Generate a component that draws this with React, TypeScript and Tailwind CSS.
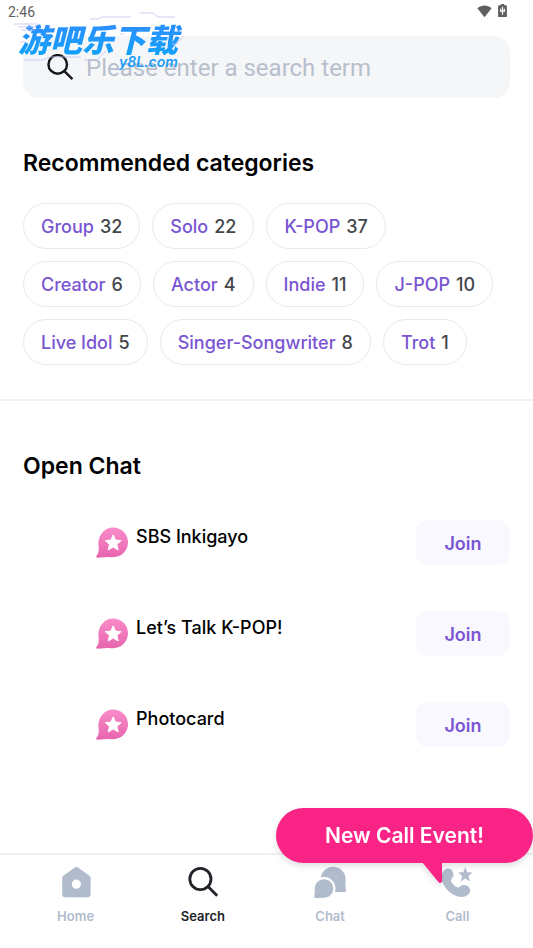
import { useState } from "react"
import clsx from "clsx"

const categories = [
  { name: "Group", count: 32 },
  { name: "Solo", count: 22 },
  { name: "K-POP", count: 37 },
  { name: "Creator", count: 6 },
  { name: "Actor", count: 4 },
  { name: "Indie", count: 11 },
  { name: "J-POP", count: 10 },
  { name: "Live Idol", count: 5 },
  { name: "Singer-Songwriter", count: 8 },
  { name: "Trot", count: 1 },
]

const rooms = ["SBS Inkigayo", "Let’s Talk K-POP!", "Photocard"]

const tabs = [
  { name: "Home", icon: HomeIcon },
  { name: "Search", icon: SearchIcon },
  { name: "Chat", icon: ChatIcon },
  { name: "Call", icon: CallIcon },
]

export default function App() {
  return (
    <div className="relative flex min-h-screen flex-col bg-white font-['Inter',sans-serif] text-black">
      <StatusBar />
      <Watermark />
      <main className="flex-1">
        <SearchBox />
        <Categories />
        <OpenChat />
      </main>
      <TabBar />
    </div>
  )
}

function StatusBar() {
  return (
    <header className="flex h-9 items-start justify-between pt-1 pr-[26px] pl-2 text-[#5f5f5f]">
      <span className="font-['Roboto',sans-serif] text-sm leading-4">2:46</span>
      <div className="flex items-start gap-[6px]">
        <svg className="h-[14px] w-[15px]" viewBox="0 0 15 14" fill="currentColor" aria-hidden="true">
          <path d="M7.5 13.2.4 4.2C4.6.5 10.4.5 14.6 4.2z" />
        </svg>
        <svg className="h-[14px] w-[9px]" viewBox="0 0 9 14" aria-hidden="true">
          <path d="M2.8 0h3.4v1.3H8a.9.9 0 0 1 .9.9v10a.9.9 0 0 1-.9.9H1a.9.9 0 0 1-.9-.9v-10a.9.9 0 0 1 .9-.9h1.8z" fill="currentColor" />
          <path d="M4.5 2.8v8M2.6 4.8v2.4h3.8V4.8" fill="none" stroke="#fff" strokeWidth="1.2" />
        </svg>
      </div>
    </header>
  )
}

function Watermark() {
  return (
    <div className="pointer-events-none absolute top-3 left-[10px] z-10 h-14 w-[176px] italic">
      <svg className="absolute inset-0 h-14 w-[176px]" viewBox="0 0 176 56" fill="none" stroke="#c3c0f0" strokeWidth="0.8" aria-hidden="true">
        <path d="M4 12h24M8 15h18M11 18h14M80 7h8l4-2h29M130 1h13l5 4h17M162 32h4l8-8M14 48h18l8-3h31M86 49l10-10M74 48h10M110 22h4M10 30h6" />
      </svg>
      <div className="flex flex-col items-start pt-2 pl-2">
        <span className="bg-linear-to-b from-[#2d8cff] to-[#0aa2fb] bg-clip-text pr-2 font-['Noto_Sans_CJK_SC',sans-serif] text-[32px] leading-9 font-black whitespace-nowrap text-transparent">
          游吧乐下载
        </span>
        <span className="ml-[101px] font-['Inter',sans-serif] text-sm leading-3 font-semibold text-[#1a9cf8]">
          y8L.com
        </span>
      </div>
    </div>
  )
}

function SearchBox() {
  const [term, setTerm] = useState("")

  return (
    <form
      className="mx-[23px] flex h-[62px] items-center gap-3 rounded-2xl bg-[#f5f6f8] pr-6 pl-[23px]"
      onSubmit={(e) => e.preventDefault()}
    >
      <SearchIcon className="h-7 w-7 text-[#16181d]" />
      <input
        type="search"
        aria-label="Search"
        className="min-w-0 flex-1 bg-transparent pt-px font-['Roboto',sans-serif] text-2xl text-[#16181d] outline-none placeholder:text-[#b7bfcc]"
        placeholder="Please enter a search term"
        value={term}
        onChange={(e) => setTerm(e.target.value)}
      />
    </form>
  )
}

function Categories() {
  return (
    <section className="border-b-2 border-[#f1f1f3] px-[23px] pt-[49px] pb-[34px]">
      <h2 className="text-[23px] leading-8 font-semibold">Recommended categories</h2>
      <ul className="mt-6 flex flex-wrap gap-3">
        {categories.map((category) => (
          <li key={category.name}>
            <button
              type="button"
              className="flex h-[46px] items-center gap-[6px] rounded-full border border-[#e9e9ec] px-[17px] pt-[2px] text-lg font-medium text-[#7a55d3]"
            >
              {category.name} <span className="text-[#44474b]">{category.count}</span>
            </button>
          </li>
        ))}
      </ul>
    </section>
  )
}

function OpenChat() {
  return (
    <section className="px-[23px] pt-[49px] pb-6">
      <h2 className="text-[23px] leading-8 font-semibold">Open Chat</h2>
      <ul className="mt-[38px] flex flex-col gap-[46px]">
        {rooms.map((room) => (
          <li key={room} className="flex h-[45px] items-start gap-2 pl-[73px]">
            <RoomIcon />
            <span className="flex-1 pt-[5px] text-lg leading-6 font-medium">{room}</span>
            <button
              type="button"
              className="h-[45px] w-[94px] rounded-xl bg-[#f9f8fe] pt-[2px] text-lg font-semibold text-[#7a55d3]"
            >
              Join
            </button>
          </li>
        ))}
      </ul>
    </section>
  )
}

function TabBar() {
  const [active, setActive] = useState("Search")

  return (
    <nav className="relative border-t-2 border-[#f1f1f3] px-3">
      <EventBubble />
      <ul className="grid h-[93px] grid-cols-4">
        {tabs.map(({ name, icon: Icon }) => (
          <li key={name}>
            <button
              type="button"
              className={clsx(
                "flex w-full flex-col items-center gap-2 pt-[11px] text-[13px] leading-5 font-semibold",
                active === name ? "text-[#202328]" : "text-[#b0bccc]"
              )}
              onClick={() => setActive(name)}
            >
              <Icon className="h-8 w-8" />
              {name}
            </button>
          </li>
        ))}
      </ul>
    </nav>
  )
}

function EventBubble() {
  return (
    <button
      type="button"
      className="absolute -top-[47px] right-0 z-10 h-[55px] w-[257px] rounded-full bg-[#fa2487] text-[21px] font-semibold text-white drop-shadow-md"
    >
      New Call Event!
      <svg className="absolute top-[54px] left-[146px] h-[22px] w-[21px]" viewBox="0 0 21 22" fill="#fa2487" aria-hidden="true">
        <path d="M0 0h20v19c0 2.2-2.4 2.4-3.6 1z" />
      </svg>
    </button>
  )
}

type IconProps = { className?: string }

function SearchIcon({ className }: IconProps) {
  return (
    <svg className={className} viewBox="0 0 32 32" fill="none" stroke="currentColor" strokeWidth="2.8" aria-hidden="true">
      <circle cx="13.4" cy="13" r="10.6" />
      <path d="m21 20.6 9.2 9.2" />
    </svg>
  )
}

function HomeIcon({ className }: IconProps) {
  return (
    <svg className={className} viewBox="0 0 32 32" fill="currentColor" aria-hidden="true">
      <path
        fillRule="evenodd"
        d="M14.8 1.5a2.8 2.8 0 0 1 3.200 0l11.100 8c1 .7 1.500 1.700 1.500 2.800v15.900a3 3 0 0 1-3 3h-22.400a3 3 0 0 1-3-3V12.300c0-1.100.5-2.100 1.500-2.800zM16.400 13.600a4.600 4.600 0 1 0 0 9.200 4.600 4.600 0 0 0 0-9.200z"
      />
    </svg>
  )
}

function ChatIcon({ className }: IconProps) {
  return (
    <svg className={className} viewBox="0 0 32 32" fill="currentColor" aria-hidden="true">
      <path d="M19.200.8c7 0 12.400 5.500 12.400 12.500 0 2-.2 3.700-.2 5.200l.6 5.700c.1 1.200-.5 1.800-1.700 1.800H19.200A12.500 12.500 0 1 1 19.200.8z" />
      <path
        d="M10 13.200c5.200 0 9.300 4.200 9.300 9.300S15.200 31.800 10 31.800l-8 .2C.9 32 .2 31.400.3 30.200l.6-4.400C-.3 18.600 4 13.200 10 13.200z"
        stroke="#fff"
        strokeWidth="4.4"
        paintOrder="stroke"
      />
    </svg>
  )
}

function CallIcon({ className }: IconProps) {
  return (
    <svg className={className} viewBox="0 0 32 32" fill="currentColor" aria-hidden="true">
      <path d="M3.400 4.200c2.600-2.400 6.200-2 8 .8 1.500 2.500 1.500 5.500-.4 7.300-1.200 1.200-1.300 2.400-.4 3.900 1.200 2 2.600 3.400 4.600 4.600 1.500.9 2.800.8 4-.4 2-1.900 5-1.900 7.500-.4 3 1.900 3.300 5.700.8 8.300-3.200 3.300-8.800 3.700-14.300.8C7.500 26.100 3.500 21.600 1.500 16.200-.2 11.600.4 7 3.400 4.200z" />
      <path d="m24.300 1.200 2 5.100 5.300.3-4.100 3.500 1.400 5.300-4.600-2.900-4.500 2.900 1.300-5.300-4.100-3.500 5.300-.3z" />
    </svg>
  )
}

function RoomIcon() {
  return (
    <svg className="mt-[7px] h-8 w-8 shrink-0" viewBox="0 0 32 32" aria-hidden="true">
      <defs>
        <linearGradient id="room" x1="0" y1="0" x2="0" y2="1">
          <stop offset="0" stopColor="#f98cc9" />
          <stop offset="1" stopColor="#e765ae" />
        </linearGradient>
      </defs>
      <path
        d="M17 .4c8.500 0 15 6.600 15 14.900s-6.500 14.900-15 14.900c-2.600 0-4.200-.4-6-.3l-9.800.8c-1 0-1.400-.8-.8-1.600 2-2.600 2.800-5.600 2.200-9.600C1.100 9.700 7.800.4 17 .4z"
        fill="url(#room)"
      />
      <path
        d="m17.200 7.800 2.300 5.300 5.700.5-4.300 3.800 1.300 5.600-5-3-5 3 1.300-5.600-4.300-3.800 5.700-.5z"
        fill="#fff"
        stroke="#fff"
        strokeLinejoin="round"
      />
    </svg>
  )
}
